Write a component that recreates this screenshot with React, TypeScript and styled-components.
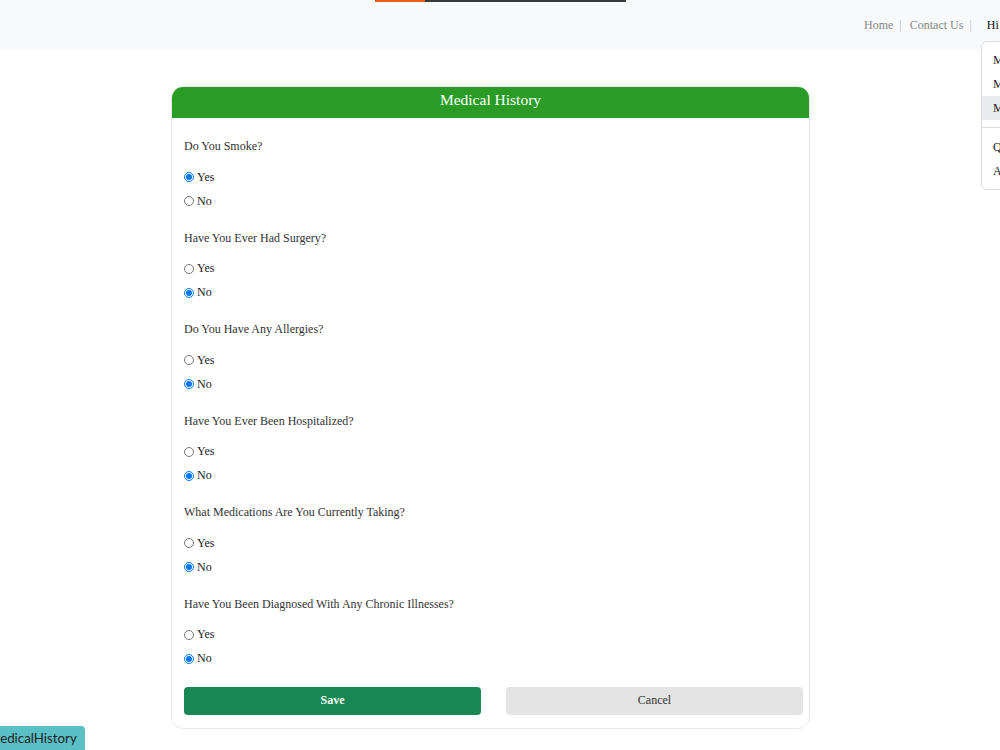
import React from "react";
import styled, { createGlobalStyle } from "styled-components";

const GlobalStyle = createGlobalStyle`
  html, body {
    margin: 0;
    padding: 0;
    background: #ffffff;
    overflow: hidden;
  }
  body {
    font-family: "Liberation Serif", "Times New Roman", serif;
    color: #333;
  }
`;

const Page = styled.div`
  width: 1000px;
  min-height: 750px;
  position: relative;
  overflow: hidden;
`;

const TopBar = styled.header`
  height: 50px;
  background: #f8f9fa;
  display: flex;
  flex-direction: column;
  position: relative;
`;

const LoadStrip = styled.div`
  align-self: center;
  margin-left: 1px;
  width: 251px;
  height: 2px;
  display: flex;
  background: #3a3a3a;
`;

const LoadFill = styled.div<{ $pct: number }>`
  width: ${(p) => p.$pct}%;
  background: #e5611d;
`;

const Nav = styled.nav`
  display: flex;
  align-items: center;
  margin-top: 15px;
  padding-left: 864px;
  white-space: nowrap;
  font-size: 12px;
  line-height: 16px;
`;

const NavLink = styled.a`
  color: #888;
  text-decoration: none;
`;

const Sep = styled.span`
  color: #bbb;
  margin: 0 8px 0 6px;
`;

const UserName = styled.span`
  color: #111;
  margin-left: 7px;
`;

const Menu = styled.ul`
  position: absolute;
  top: 41px;
  left: 981px;
  width: 160px;
  margin: 0;
  padding: 6px 0;
  list-style: none;
  background: #fff;
  border: 1px solid #dcdcdc;
  border-radius: 6px;
  z-index: 10;
  font-size: 12px;
`;

const MenuItem = styled.li<{ $active?: boolean }>`
  height: 24px;
  line-height: 24px;
  padding-left: 11px;
  color: #222;
  background: ${(p) => (p.$active ? "#e9ecef" : "transparent")};
`;

const MenuDivider = styled.li`
  height: 0;
  border-top: 1px solid #ddd;
  margin: 7px 0;
`;

const Main = styled.main`
  display: flex;
  justify-content: center;
  padding: 36px 19px 0 0;
`;

const Card = styled.section`
  width: 639px;
  box-sizing: border-box;
  border: 1px solid #e8e8e8;
  border-radius: 12px;
  background: #fff;
  overflow: hidden;
`;

const CardHeader = styled.h2`
  margin: 0;
  height: 31px;
  line-height: 26px;
  background: #2a9c26;
  color: #fff;
  font-weight: normal;
  font-size: 15.5px;
  text-align: center;
`;

const CardBody = styled.form`
  padding: 19px 6px 13px 12px;
`;

const Question = styled.fieldset`
  border: 0;
  margin: 0 0 15.6px 0;
  padding: 0;
`;

const QuestionLabel = styled.legend`
  padding: 0;
  font-size: 12px;
  line-height: 18px;
  color: #333;
  margin-bottom: 10px;
  float: left;
  width: 100%;
`;

const Option = styled.label`
  clear: both;
  display: flex;
  align-items: center;
  height: 24px;
  font-size: 12px;
  color: #222;
`;

const Radio = styled.input`
  width: 10px;
  height: 10px;
  margin: 0 3px 0 0;
`;

const Actions = styled.div`
  display: grid;
  grid-template-columns: 297px 297px;
  column-gap: 25px;
`;

const Button = styled.button<{ $primary?: boolean }>`
  height: 28px;
  border: 0;
  border-radius: 4px;
  font-family: "Liberation Serif", "Times New Roman", serif;
  font-size: 12px;
  font-weight: ${(p) => (p.$primary ? "bold" : "normal")};
  color: ${(p) => (p.$primary ? "#fff" : "#333")};
  background: ${(p) => (p.$primary ? "#198754" : "#e4e4e4")};
`;

const Badge = styled.div`
  position: fixed;
  left: -20px;
  bottom: 0;
  height: 24px;
  line-height: 24px;
  padding: 0 8px;
  background: #5bbfc6;
  color: #222;
  border-top-right-radius: 4px;
  font-family: Lato, "Liberation Sans", sans-serif;
  font-size: 13.3px;
`;

const questions = [
  { q: "Do You Smoke?", a: "yes" },
  { q: "Have You Ever Had Surgery?", a: "no" },
  { q: "Do You Have Any Allergies?", a: "no" },
  { q: "Have You Ever Been Hospitalized?", a: "no" },
  { q: "What Medications Are You Currently Taking?", a: "no" },
  { q: "Have You Been Diagnosed With Any Chronic Illnesses?", a: "no" },
];

export default function App() {
  return (
    <Page>
      <GlobalStyle />
      <TopBar>
        <LoadStrip>
          <LoadFill $pct={20} />
        </LoadStrip>
        <Nav>
          <NavLink href="#">Home</NavLink>
          <Sep>|</Sep>
          <NavLink href="#">Contact Us</NavLink>
          <Sep>|</Sep>
          <UserName>Hi Patient</UserName>
        </Nav>
        <Menu>
          <MenuItem>My Profile</MenuItem>
          <MenuItem>My Appointments</MenuItem>
          <MenuItem $active>Medical History</MenuItem>
          <MenuDivider />
          <MenuItem>Questions</MenuItem>
          <MenuItem>Account</MenuItem>
        </Menu>
      </TopBar>
      <Main>
        <Card>
          <CardHeader>Medical History</CardHeader>
          <CardBody onSubmit={(e) => e.preventDefault()}>
            {questions.map((item, i) => (
              <Question key={i}>
                <QuestionLabel>{item.q}</QuestionLabel>
                <Option>
                  <Radio type="radio" name={`q${i}`} defaultChecked={item.a === "yes"} />
                  Yes
                </Option>
                <Option>
                  <Radio type="radio" name={`q${i}`} defaultChecked={item.a === "no"} />
                  No
                </Option>
              </Question>
            ))}
            <Actions>
              <Button type="submit" $primary>
                Save
              </Button>
              <Button type="button">Cancel</Button>
            </Actions>
          </CardBody>
        </Card>
      </Main>
      <Badge>MedicalHistory</Badge>
    </Page>
  );
}
